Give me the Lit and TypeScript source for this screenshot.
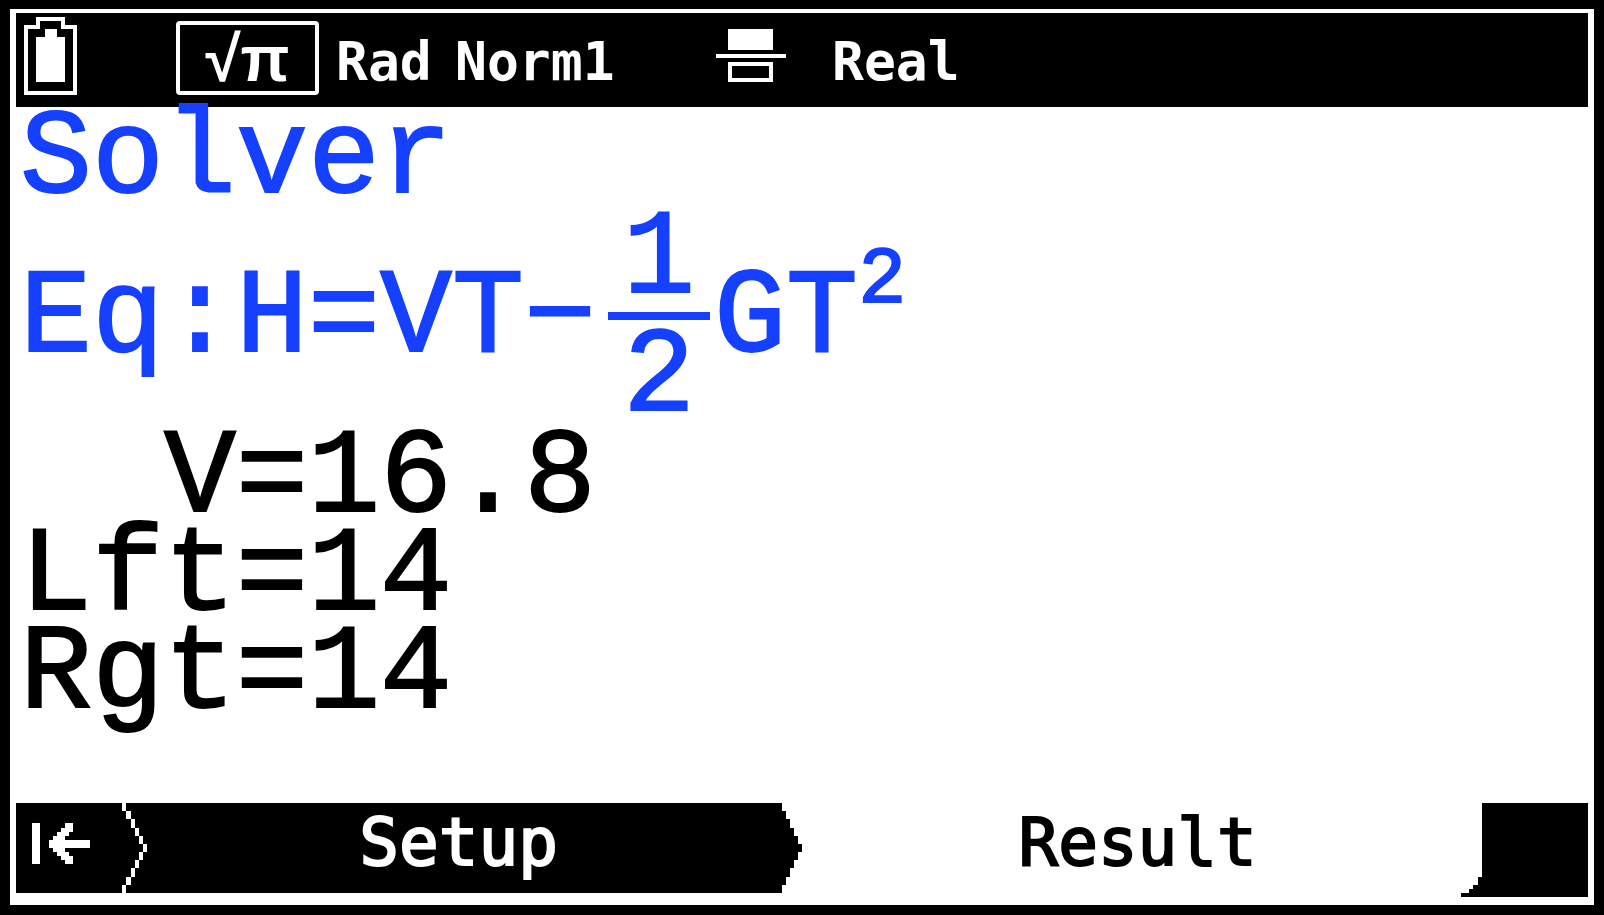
import { LitElement, html, css } from "lit";
import { customElement, property } from "lit/decorators.js";

@customElement("status-bar")
class StatusBar extends LitElement {
  static styles = css`
    :host {
      display: grid;
      grid-template-columns: 152px 160px 119px 258px 119px 1fr;
      height: 94px;
      padding-left: 8px;
      box-sizing: border-box;
      background: #000;
      color: #fff;
      font: bold 53px/78px "DejaVu Sans Mono", monospace;
    }
    svg {
      display: block;
      shape-rendering: crispEdges;
    }
    .battery {
      margin-top: 4px;
    }
    .input-mode {
      box-sizing: border-box;
      width: 143px;
      height: 74px;
      margin-top: 8px;
      border: 4px solid #fff;
      border-radius: 4px;
      font: bold 64px/68px "Liberation Sans", sans-serif;
      text-align: center;
    }
    .label {
      margin-top: 10px;
      white-space: nowrap;
    }
    .fraction {
      margin: 16px 0 0 3px;
    }
  `;

  render() {
    return html`
      <svg class="battery" width="53" height="78" viewBox="0 0 53 78" role="img" aria-label="Battery full">
        <path
          fill="#fff"
          fill-rule="evenodd"
          d="M0 8H12V0H41V8H53V78H0ZM4 12V74H49V12H37V4H16V12ZM12 20H21V12H33V20H41V65H12Z"
        />
      </svg>
      <div class="input-mode">√π</div>
      <span class="label">Rad</span>
      <span class="label">Norm1</span>
      <svg class="fraction" width="70" height="53" viewBox="0 0 70 53" role="img" aria-label="Fraction result">
        <path fill="#fff" fill-rule="evenodd" d="M12 0H57V21H12ZM0 25H70V29H0ZM12 33H57V53H12ZM16 37V49H53V37Z" />
      </svg>
      <span class="label">Real</span>
    `;
  }
}

@customElement("solver-output")
class SolverOutput extends LitElement {
  @property({ attribute: false }) results: string[] = [];

  static styles = css`
    :host {
      display: block;
      padding: 4px 0 0 4px;
      color: #000;
      font: 120px/98px "Liberation Mono", monospace;
      -webkit-text-stroke: 2px currentColor;
      white-space: pre;
    }
    h1 {
      margin: 0;
      font: inherit;
      color: #1540ff;
    }
    .equation {
      display: flex;
      align-items: center;
      padding: 2px 0 3px;
      color: #1540ff;
    }
    .fraction {
      display: flex;
      flex-direction: column;
      align-items: center;
      width: 102px;
      margin: 0 4px 0 12px;
    }
    .rule {
      align-self: stretch;
      height: 8px;
      margin: 3px 0 9px;
      background: currentColor;
    }
    sup {
      font-size: 80px;
      line-height: 0;
      vertical-align: 49px;
    }
  `;

  render() {
    return html`<h1>Solver</h1><div class="equation"><span>Eq:H=VT−</span><span class="fraction"><span>1</span><span class="rule"></span><span>2</span></span><span>GT<sup>2</sup></span></div>${this.results.map(
      (line) => html`<div>${line}</div>`
    )}`;
  }
}

@customElement("function-menu")
class FunctionMenu extends LitElement {
  static styles = css`
    :host {
      display: flex;
      align-items: flex-start;
    }
    svg {
      display: block;
      flex: none;
      shape-rendering: crispEdges;
    }
    button {
      box-sizing: border-box;
      height: 90px;
      margin: 0;
      padding: 0;
      border: 0;
      border-radius: 0;
      background: #000;
      color: #fff;
      font: 66px/80px "DejaVu Sans Mono", monospace;
      -webkit-text-stroke: 2px currentColor;
    }
    .back {
      flex: none;
      width: 106px;
    }
    .setup {
      flex: 53 1 0;
      padding: 0 12px 10px 0;
    }
    .result {
      flex: 55 1 0;
      padding: 0 0 10px 12px;
      background: #fff;
      color: #000;
    }
  `;

  render() {
    return html`
      <button class="back" aria-label="Back to start">
        <svg width="106" height="90" viewBox="0 0 106 90">
          <path
            fill="#fff"
            d="M16 20H24V61H16ZM49 20H57V29H53V33H49V37H74V45H49V49H53V53H57V61H49V57H45V53H41V49H37V45H33V37H37V33H41V29H45V25H49Z"
          />
        </svg>
      </button>
      <svg width="25" height="90" viewBox="0 0 25 90">
        <path d="M0 0H25V90H0Z" />
        <path
          fill="#fff"
          d="M0 0h4v8h-4zM4 8h5v8h-5zM9 16h4v9h-4zM13 25h4v8h-4zM17 33h4v8h-4zM21 41h4v8h-4zM17 49h4v8h-4zM13 57h4v8h-4zM9 65h4v9h-4zM4 74h5v8h-5zM0 82h4v8h-4z"
        />
      </svg>
      <button class="setup">Setup</button>
      <svg width="20" height="90" viewBox="0 0 20 90">
        <path d="M0 0V8H4V16H8V25H12V33H16V41H20V49H16V57H12V65H8V74H4V82H0V90Z" />
      </svg>
      <button class="result">Result</button>
      <svg width="127" height="94" viewBox="0 0 127 94">
        <path d="M21 0H127V94H0V90H8V86H12V82H17V74H21Z" />
      </svg>
    `;
  }
}

@customElement("app-root")
class AppRoot extends LitElement {
  static styles = css`
    :host {
      display: flex;
      flex-direction: column;
      box-sizing: border-box;
      min-height: 100vh;
      padding: 4px 6px 8px;
      border: solid #000;
      border-width: 9px 10px 10px;
      background: #fff;
    }
    solver-output {
      flex: 1;
    }
  `;

  render() {
    return html`
      <status-bar></status-bar>
      <solver-output .results=${["  V=16.8", "Lft=14", "Rgt=14"]}></solver-output>
      <function-menu></function-menu>
    `;
  }
}
